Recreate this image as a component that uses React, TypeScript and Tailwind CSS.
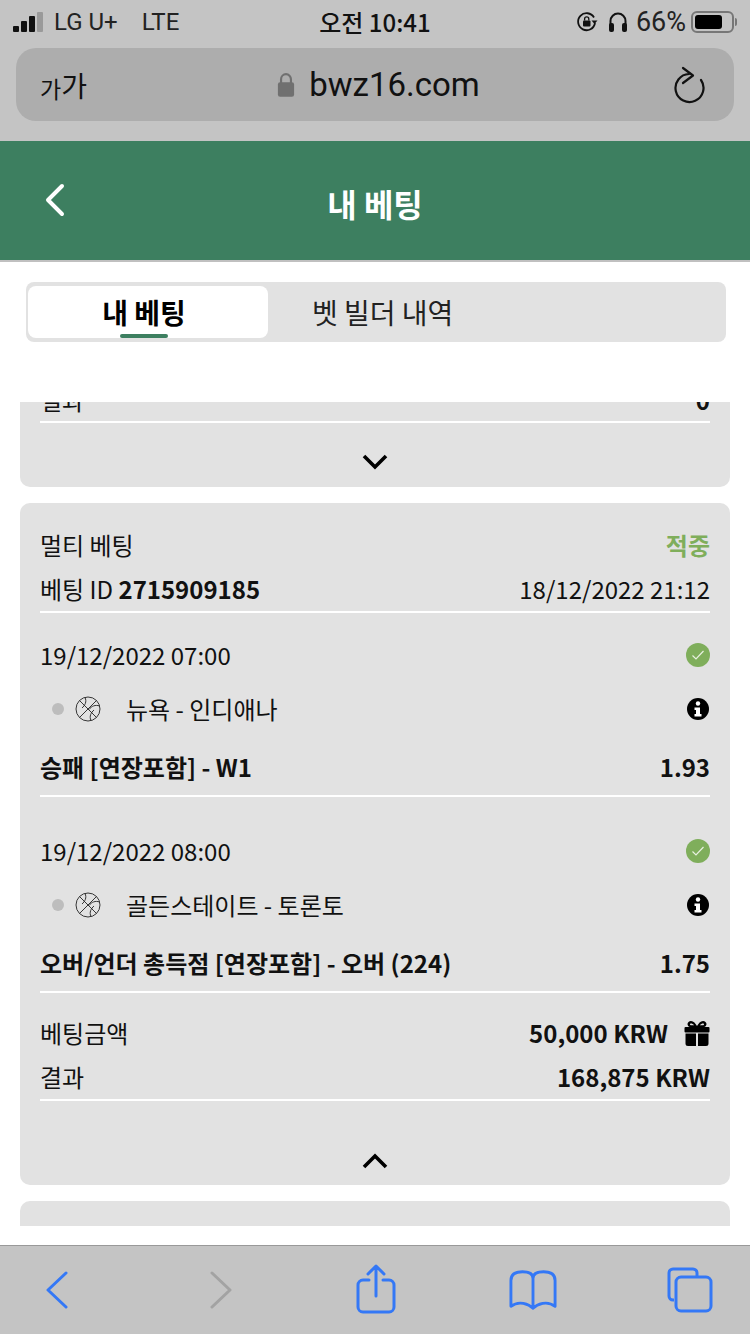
const FONT = 'font-["Noto_Sans_CJK_KR","Noto_Sans",sans-serif]';

function SignalIcon() {
  return (
    <div className="flex items-end gap-[2px] h-5">
      <div className="w-[6px] h-[6px] rounded-[1px] bg-[#111]" />
      <div className="w-[6px] h-[11px] rounded-[1px] bg-[#111]" />
      <div className="w-[6px] h-4 rounded-[1px] bg-[#111]" />
      <div className="w-[6px] h-5 rounded-[1px] bg-[#9a9a9a]" />
    </div>
  );
}

function BatteryIcon() {
  return (
    <div className="flex items-center">
      <div className="w-[43px] h-[22px] rounded-[6px] border-2 border-[#777] p-[2px]">
        <div className="w-[27px] h-full rounded-[3px] bg-black" />
      </div>
      <div className="w-[2px] h-[8px] ml-[1px] rounded-r bg-[#777]" />
    </div>
  );
}

function RotationLockIcon() {
  return (
    <svg width="22" height="22" viewBox="0 0 22 22" fill="none">
      <path d="M18 6.500A8.500 8.500 0 1 0 19 12" stroke="#111" strokeWidth="1.800" />
      <path d="M15.500 9.500h6l-3 3.600z" fill="#111" />
      <rect x="7" y="9.500" width="7.500" height="6" rx="1" fill="#111" />
      <path d="M8.600 9.500V8a2.100 2.100 0 0 1 4.200 0v1.500" stroke="#111" strokeWidth="1.300" />
    </svg>
  );
}

function HeadphonesIcon() {
  return (
    <svg width="20" height="22" viewBox="0 0 20 22" fill="none">
      <path d="M2.500 14V10a7.500 7.500 0 0 1 15 0v4" stroke="#111" strokeWidth="2" />
      <rect x="1" y="12" width="5" height="9" rx="2" fill="#111" />
      <rect x="14" y="12" width="5" height="9" rx="2" fill="#111" />
    </svg>
  );
}

function LockIcon() {
  return (
    <svg width="18" height="28" viewBox="0 0 20 28" fill="none">
      <path d="M4.500 13V7.500a5.500 5.500 0 0 1 11 0V13" stroke="#707070" strokeWidth="2.400" />
      <rect x="1" y="11" width="18" height="16" rx="2.500" fill="#707070" />
    </svg>
  );
}

function ReloadIcon() {
  return (
    <svg width="32" height="38" viewBox="0 0 32 38" fill="none" stroke="#111" strokeWidth="2.200" strokeLinecap="round" strokeLinejoin="round">
      <path d="M15 8A14 14 0 1 0 27 14" />
      <path d="M9 2l10 7.500L9 17" />
    </svg>
  );
}

function BasketballIcon() {
  return (
    <svg width="26" height="26" viewBox="0 0 26 26" fill="none" stroke="#222" strokeWidth="0.900">
      <circle cx="13" cy="13" r="12" />
      <path d="M4.500 4.500l17 17M21.500 4.500l-17 17" />
      <path d="M10 1.500c2 4 0 8-3 10.500M24.500 10c-4-1.500-8 0-10.500 3.500M16 24.500c-2-4 0-8 3-10.500" />
    </svg>
  );
}

function CheckBadge() {
  return (
    <div className="w-6 h-6 rounded-full bg-[#7fae5b] flex items-center justify-center">
      <svg width="14" height="12" viewBox="0 0 14 12" fill="none" stroke="#e8f0e0" strokeWidth="1.200">
        <path d="M1.500 6.500l3.500 3.500 7.500-8" />
      </svg>
    </div>
  );
}

function InfoBadge() {
  return (
    <div className="w-[22px] h-[22px] mr-[1px] rounded-full bg-black flex items-center justify-center">
      <svg width="10" height="16" viewBox="0 0 10 16" fill="#fff">
        <circle cx="5" cy="2.500" r="2.200" />
        <path d="M1.500 6.500h5.500v6.500h1.500v2.500H1.500V13H3V9H1.500z" />
      </svg>
    </div>
  );
}

function GiftIcon() {
  return (
    <svg width="26" height="26" viewBox="0 0 26 26" fill="#000">
      <path d="M7 1c2.500 0 4.500 2.500 6 5 1.500-2.500 3.500-5 6-5 2 0 3.500 1.500 3.500 3S21.500 7 20 7H6C4.500 7 3.500 5.500 3.500 4S5 1 7 1zm0 2.500C6.200 3.500 6 4 6 4.500S6.500 5.200 7 5.200h3.200C9.200 4.200 8 3.500 7 3.500zm12 0c-1 0-2.200.7-3.200 1.700H19c.5 0 1-.2 1-.7s-.2-1-1-1z" fill="#000" fillRule="evenodd" />
      <rect x="0.500" y="7" width="25" height="5.500" rx="1" />
      <path d="M1.500 13.500h10.500V26H4a2.500 2.500 0 0 1-2.500-2.500zM14 13.500h10.500v10A2.500 2.500 0 0 1 22 26h-8z" />
    </svg>
  );
}

function Leg({ date, match, market, odd }: { date: string; match: string; market: string; odd: string }) {
  return (
    <div className="border-b-2 border-white pt-5 pb-[6px]">
      <div className="flex items-center justify-between h-11">
        <span>{date}</span>
        <CheckBadge />
      </div>
      <div className="flex items-center justify-between h-11 mt-[10px]">
        <div className="flex items-center">
          <div className="w-3 h-3 ml-3 rounded-full bg-[#bdbdbd]" />
          <div className="ml-[11px]">
            <BasketballIcon />
          </div>
          <span className="ml-[25px]">{match}</span>
        </div>
        <InfoBadge />
      </div>
      <div className="flex items-center justify-between h-11 mt-[14px] font-bold">
        <span>{market}</span>
        <span>{odd}</span>
      </div>
    </div>
  );
}

export default function App() {
  return (
    <div className={`${FONT} w-[750px] h-[1334px] flex flex-col bg-white text-[#111] overflow-hidden`}>
      {/* browser chrome */}
      <div className="h-[141px] shrink-0 bg-[#c4c4c4] px-4 font-['Roboto',sans-serif]">
        <div className="h-[48px] flex items-center justify-between text-[24px] pb-1 -mx-[3px]">
          <div className="flex items-center w-[260px]">
            <SignalIcon />
            <span className="ml-[11px] text-[#222]">LG U+</span>
            <span className="ml-[24px] text-[#222]">LTE</span>
          </div>
          <span className={`${FONT} font-medium`}>오전 10:41</span>
          <div className="flex items-center justify-end w-[260px]">
            <RotationLockIcon />
            <div className="ml-[10px]">
              <HeadphonesIcon />
            </div>
            <span className="ml-[8px] text-[27px] text-[#222]">66%</span>
            <div className="ml-[5px]">
              <BatteryIcon />
            </div>
          </div>
        </div>
        <div className="h-[73px] rounded-[20px] bg-[#adadad] flex items-center justify-between pl-6 pr-7">
          <span className={`${FONT} flex items-end`}>
            <span className="text-[23px]">가</span>
            <span className="text-[28px]">가</span>
          </span>
          <div className="flex items-center gap-[14px] -ml-[4px]">
            <LockIcon />
            <span className="text-[33px]">bwz16.com</span>
          </div>
          <ReloadIcon />
        </div>
      </div>

      {/* app header */}
      <div className="relative h-[121px] shrink-0 bg-[#3d7f60] border-b-2 border-[#c0c0c0] flex items-center justify-center">
        <svg className="absolute left-[44px] top-[42px]" width="22" height="34" viewBox="0 0 22 34" fill="none" stroke="#fff" strokeWidth="4" strokeLinecap="round" strokeLinejoin="round">
          <path d="M18 3L4 17l14 14" />
        </svg>
        <span className="text-white text-[32px] font-bold pt-1">내 베팅</span>
      </div>

      {/* tabs */}
      <div className="shrink-0 pl-[26px] pr-[24px] pt-[20px] h-[140px]">
        <div className="h-[60px] rounded-[8px] bg-[#e2e2e2] p-[2px] pt-1 pb-1 flex">
          <div className="relative w-[240px] rounded-[8px] bg-white flex items-center justify-center pr-2 text-[28px] font-bold text-black">
            내 베팅
            <div className="absolute left-[92px] bottom-0 w-12 h-1 rounded-[2px] bg-[#3d7f60]" />
          </div>
          <div className="ml-[44px] flex items-center text-[28px] text-[#222]">벳 빌더 내역</div>
        </div>
      </div>

      {/* bets list, scrolled */}
      <div className="h-[824px] shrink-0 overflow-hidden px-5 text-[24px] leading-[44px]">
        <div className="-mt-[24px] h-[109px] rounded-b-[10px] bg-[#e2e2e2] px-5">
          <div className="flex justify-between h-[45px] border-b-2 border-white font-normal">
            <span>결과</span>
            <span className="font-bold">0</span>
          </div>
          <div className="flex justify-center pt-[31px]">
            <svg width="26" height="16" viewBox="0 0 26 16" fill="none" stroke="#000" strokeWidth="3.600">
              <path d="M2 2l11 11L24 2" />
            </svg>
          </div>
        </div>

        <div className="mt-4 h-[682px] rounded-[10px] bg-[#e2e2e2] px-5 pt-5">
          <div className="flex items-center justify-between h-11">
            <span>멀티 베팅</span>
            <span className="font-bold text-[#7fae5b]">적중</span>
          </div>
          <div className="flex items-center justify-between h-[46px] border-b-2 border-white">
            <span>
              베팅 ID <span className="font-bold">2715909185</span>
            </span>
            <span>18/12/2022 21:12</span>
          </div>
          <Leg date="19/12/2022 07:00" match="뉴욕 - 인디애나" market="승패 [연장포함] - W1" odd="1.93" />
          <div className="mt-3">
            <Leg date="19/12/2022 08:00" match="골든스테이트 - 토론토" market="오버/언더 총득점 [연장포함] - 오버 (224)" odd="1.75" />
          </div>
          <div className="flex items-center justify-between h-11 mt-[18px]">
            <span>베팅금액</span>
            <span className="flex items-center gap-4 font-bold">
              50,000 KRW
              <GiftIcon />
            </span>
          </div>
          <div className="flex items-center justify-between h-[46px] border-b-2 border-white">
            <span>결과</span>
            <span className="font-bold">168,875 KRW</span>
          </div>
          <div className="flex justify-center pt-[52px]">
            <svg width="26" height="16" viewBox="0 0 26 16" fill="none" stroke="#000" strokeWidth="3.600">
              <path d="M2 14L13 3l11 11" />
            </svg>
          </div>
        </div>

        <div className="mt-4 h-24 rounded-t-[10px] bg-[#e2e2e2]" />
      </div>

      {/* safari toolbar */}
      <div className="mt-[19px] flex-1 bg-[#c4c4c4] border-t border-[#999] flex items-center pl-[46px]">
        <svg width="22" height="38" viewBox="0 0 22 38" fill="none" stroke="#3478f6" strokeWidth="3" strokeLinecap="round" strokeLinejoin="round">
          <path d="M20 2L2 19l18 17" />
        </svg>
        <svg className="ml-[142px]" width="22" height="38" viewBox="0 0 22 38" fill="none" stroke="#a3a3a3" strokeWidth="3" strokeLinecap="round" strokeLinejoin="round">
          <path d="M2 2l18 17L2 36" />
        </svg>
        <svg className="ml-[124px] -mt-[2px]" width="40" height="50" viewBox="0 0 40 50" fill="none" stroke="#3478f6" strokeWidth="3" strokeLinecap="round" strokeLinejoin="round">
          <path d="M20 2v30M12 10l8-8 8 8" />
          <path d="M13 16H7a5 5 0 0 0-5 5v22a5 5 0 0 0 5 5h26a5 5 0 0 0 5-5V21a5 5 0 0 0-5-5h-6" />
        </svg>
        <svg className="ml-[113px]" width="48" height="42" viewBox="0 0 50 42" fill="none" stroke="#3478f6" strokeWidth="3" strokeLinecap="round" strokeLinejoin="round">
          <path d="M25 9C25 4 20 2 14 2S2 4 2 11v27c4-3 8-4 13-3 5 1 8 3 10 5 2-2 5-4 10-5 5-1 9 0 13 3V11c0-7-6-9-12-9s-11 2-11 7v31" />
        </svg>
        <svg className="ml-[110px]" width="46" height="46" viewBox="0 0 46 46" fill="none" stroke="#3478f6" strokeWidth="3" strokeLinejoin="round">
          <path d="M7 33H6a4 4 0 0 1-4-4V6a4 4 0 0 1 4-4h20a4 4 0 0 1 4 4v4" />
          <rect x="9" y="10" width="35" height="34" rx="5" />
        </svg>
      </div>
    </div>
  );
}
